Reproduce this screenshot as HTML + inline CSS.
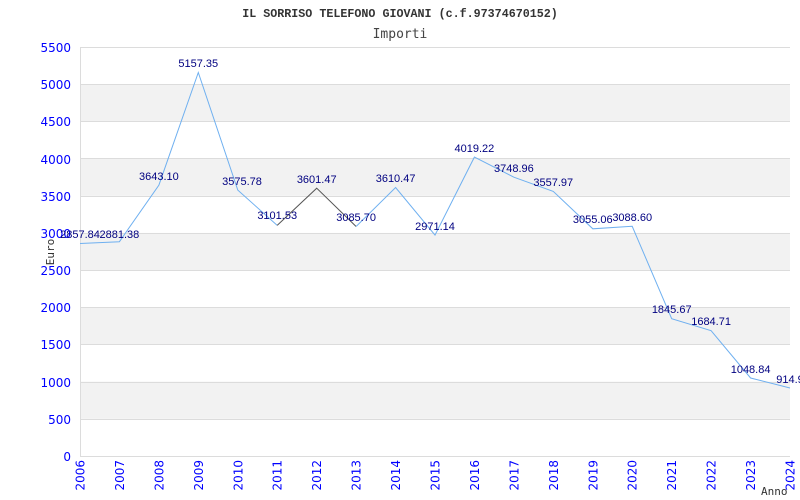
<!DOCTYPE html>
<html><head><style>body{margin:0;background:#fff}svg{display:block}</style></head><body>
<svg width="800" height="500" xmlns="http://www.w3.org/2000/svg">
<rect width="800" height="500" fill="#fff"/>
<g fill="#f2f2f2">
<rect x="80" y="84.2" width="710" height="37.2"/>
<rect x="80" y="158.6" width="710" height="37.2"/>
<rect x="80" y="232.9" width="710" height="37.2"/>
<rect x="80" y="307.3" width="710" height="37.2"/>
<rect x="80" y="381.6" width="710" height="37.2"/>
</g>
<g stroke="#dcdcdc" stroke-width="1">
<line x1="80" y1="47.5" x2="790" y2="47.5"/><line x1="80" y1="84.5" x2="790" y2="84.5"/>
<line x1="80" y1="121.5" x2="790" y2="121.5"/><line x1="80" y1="158.5" x2="790" y2="158.5"/>
<line x1="80" y1="196.5" x2="790" y2="196.5"/><line x1="80" y1="233.5" x2="790" y2="233.5"/>
<line x1="80" y1="270.5" x2="790" y2="270.5"/><line x1="80" y1="307.5" x2="790" y2="307.5"/>
<line x1="80" y1="344.5" x2="790" y2="344.5"/><line x1="80" y1="382.5" x2="790" y2="382.5"/>
<line x1="80" y1="419.5" x2="790" y2="419.5"/>
<line x1="80.5" y1="47" x2="80.5" y2="456"/><line x1="80" y1="456.5" x2="790" y2="456.5"/>
</g>
<text x="400" y="17" text-anchor="middle" font-family="Liberation Mono, monospace" font-weight="bold" font-size="11.7" fill="#333">IL SORRISO TELEFONO GIOVANI (c.f.97374670152)</text>
<text x="400" y="38" text-anchor="middle" font-family="DejaVu Sans Mono, monospace" font-size="13" fill="#444">Importi</text>
<g font-family="DejaVu Sans, sans-serif" font-size="12" fill="#0000ff" text-anchor="end">
<text x="71" y="52">5500</text><text x="71" y="89">5000</text><text x="71" y="126">4500</text>
<text x="71" y="164">4000</text><text x="71" y="201">3500</text><text x="71" y="238">3000</text>
<text x="71" y="275">2500</text><text x="71" y="312">2000</text><text x="71" y="349">1500</text>
<text x="71" y="387">1000</text><text x="71" y="424">500</text><text x="71" y="461">0</text>
</g>
<g font-family="DejaVu Sans, sans-serif" font-size="12" fill="#0000ff" text-anchor="end">
<text transform="translate(84.5,460) rotate(-90)">2006</text>
<text transform="translate(123.9,460) rotate(-90)">2007</text>
<text transform="translate(163.4,460) rotate(-90)">2008</text>
<text transform="translate(202.8,460) rotate(-90)">2009</text>
<text transform="translate(242.3,460) rotate(-90)">2010</text>
<text transform="translate(281.7,460) rotate(-90)">2011</text>
<text transform="translate(321.2,460) rotate(-90)">2012</text>
<text transform="translate(360.6,460) rotate(-90)">2013</text>
<text transform="translate(400.1,460) rotate(-90)">2014</text>
<text transform="translate(439.5,460) rotate(-90)">2015</text>
<text transform="translate(478.9,460) rotate(-90)">2016</text>
<text transform="translate(518.4,460) rotate(-90)">2017</text>
<text transform="translate(557.8,460) rotate(-90)">2018</text>
<text transform="translate(597.3,460) rotate(-90)">2019</text>
<text transform="translate(636.7,460) rotate(-90)">2020</text>
<text transform="translate(676.2,460) rotate(-90)">2021</text>
<text transform="translate(715.6,460) rotate(-90)">2022</text>
<text transform="translate(755.1,460) rotate(-90)">2023</text>
<text transform="translate(794.5,460) rotate(-90)">2024</text>
</g>
<text transform="translate(54,252) rotate(-90)" text-anchor="middle" font-family="DejaVu Sans Mono, monospace" font-size="11" fill="#333">Euro</text>
<text x="761" y="495" font-family="DejaVu Sans Mono, monospace" font-size="11" fill="#333">Anno</text>
<polyline fill="none" stroke="#6fb0f0" stroke-width="1" points="80,243.5 119.4,241.7 158.9,185.1 198.3,72.5 237.8,190.1 277.2,225.4"/>
<polyline fill="none" stroke="#555" stroke-width="1" points="277.2,225.4 316.7,188.2 356.1,226.5"/>
<polyline fill="none" stroke="#6fb0f0" stroke-width="1" points="356.1,226.5 395.6,187.5 435,235.1 474.4,157.1 513.9,177.2 553.3,191.4 592.8,228.8 632.2,226.3 671.7,318.7 711.1,330.7 750.6,378 790,388"/>
<g font-family="Liberation Sans, sans-serif" font-size="11" fill="#000080" text-anchor="middle">
<text x="80" y="238">2857.84</text><text x="119.4" y="238">2881.38</text>
<text x="158.9" y="180">3643.10</text><text x="198.3" y="67">5157.35</text>
<text x="242" y="185">3575.78</text><text x="277.2" y="219">3101.53</text>
<text x="316.7" y="183">3601.47</text><text x="356.1" y="221">3085.70</text>
<text x="395.6" y="182">3610.47</text><text x="435" y="230">2971.14</text>
<text x="474.4" y="152">4019.22</text><text x="513.9" y="172">3748.96</text>
<text x="553.3" y="186">3557.97</text><text x="592.8" y="223">3055.06</text>
<text x="632.2" y="221">3088.60</text><text x="671.7" y="313">1845.67</text>
<text x="711.1" y="325">1684.71</text><text x="750.6" y="373">1048.84</text>
<text x="790" y="383">914.9</text>
</g>
</svg>
</body></html>
